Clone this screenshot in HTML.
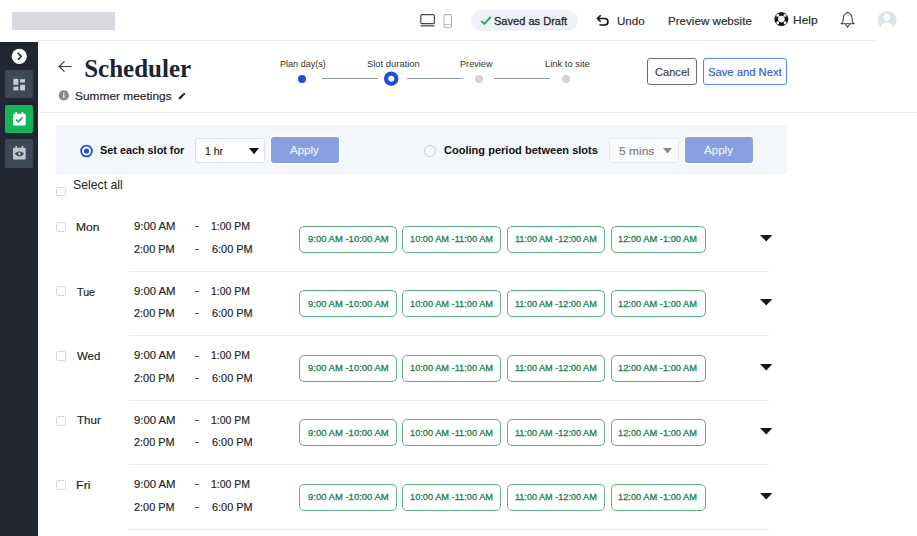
<!DOCTYPE html>
<html><head><meta charset="utf-8"><title>Scheduler</title>
<style>
html,body{margin:0;padding:0;}
body{width:917px;height:536px;position:relative;overflow:hidden;background:#fff;font-family:"Liberation Sans", sans-serif;}
.t{position:absolute;line-height:1;white-space:nowrap;}
.r{position:absolute;display:block;}
.pt{text-align:center;font-size:9.4px;color:#2a8a52;}
</style></head><body>
<div class="r" style="left:12px;top:12px;width:103px;height:18px;background:#d8d8e2;"></div>
<div class="r" style="left:38px;top:40px;width:840px;height:1px;background:#e8ebf1;"></div>
<svg class="r" style="left:419px;top:12px" width="18" height="16" viewBox="0 0 18 16"><rect x="1.8" y="2.7" width="13.6" height="8.9" rx="1.2" fill="none" stroke="#4a4a4a" stroke-width="1.25"/><rect x="1.6" y="13.2" width="14" height="1.25" fill="#4a4a4a"/></svg>
<svg class="r" style="left:442px;top:13px" width="11" height="16" viewBox="0 0 11 16"><rect x="1.9" y="1.6" width="7.6" height="12.8" rx="1.1" fill="none" stroke="#b8b8b8" stroke-width="1.05"/><line x1="2" y1="11.6" x2="9.4" y2="11.6" stroke="#b8b8b8" stroke-width="1"/></svg>
<div class="r" style="left:471px;top:10px;width:107px;height:21px;background:#eff3f7;border-radius:11px;"></div>
<svg class="r" style="left:480px;top:15px" width="12" height="11" viewBox="0 0 12 11"><path d="M1.2 5.8 L4.3 9 L10.8 1.8" fill="none" stroke="#1faa4f" stroke-width="1.8"/></svg>
<div class="t" style="left:494.06px;top:16.00px;font-size:10.59px;color:#2b2b2b;transform:scaleX(1.0449);transform-origin:0 0;-webkit-text-stroke:0.3px #2b2b2b;">Saved as Draft</div>
<svg class="r" style="left:596px;top:14px" width="14" height="13" viewBox="0 0 14 13"><path d="M1.8 4.5 H8.7 A3.25 3.25 0 0 1 8.7 11 H3.4" fill="none" stroke="#111" stroke-width="1.6"/><path d="M4.7 1.2 L1.4 4.5 L4.7 7.8" fill="none" stroke="#111" stroke-width="1.6" stroke-linejoin="round"/></svg>
<div class="t" style="left:616.94px;top:16.00px;font-size:10.89px;color:#2b2b2b;transform:scaleX(1.064);transform-origin:0 0;-webkit-text-stroke:0.15px #2b2b2b;">Undo</div>
<div class="t" style="left:667.79px;top:17.00px;font-size:10.45px;color:#2b2b2b;transform:scaleX(1.1122);transform-origin:0 0;-webkit-text-stroke:0.15px #2b2b2b;">Preview website</div>
<svg class="r" style="left:772px;top:11px" width="18" height="17" viewBox="0 0 18 17"><circle cx="9.4" cy="8.1" r="5.1" fill="none" stroke="#111" stroke-width="3.6"/><g fill="#fff"><circle cx="5.6" cy="4.3" r="1.55"/><circle cx="13.2" cy="4.3" r="1.55"/><circle cx="5.6" cy="11.9" r="1.55"/><circle cx="13.2" cy="11.9" r="1.55"/></g><circle cx="9.4" cy="8.1" r="6.6" fill="none" stroke="#333" stroke-width="0.6"/></svg>
<div class="t" style="left:792.63px;top:16.00px;font-size:10.3px;color:#2b2b2b;transform:scaleX(1.165);transform-origin:0 0;-webkit-text-stroke:0.15px #2b2b2b;">Help</div>
<svg class="r" style="left:840px;top:11px" width="16" height="18" viewBox="0 0 16 18"><path d="M7.6 1.3 C5.6 2.6 3.6 3.4 3.4 6 L3.0 10.2 C2.9 11.4 2 12 1.1 12.7 H14.1 C13.2 12 12.4 11.4 12.3 10.2 L11.9 6 C11.7 3.4 9.6 2.6 7.6 1.3 Z" fill="none" stroke="#3a3a3a" stroke-width="1.05" stroke-linejoin="round"/><path d="M5.5 13.2 L7.6 16.2 L9.7 13.2" fill="none" stroke="#3a3a3a" stroke-width="1.05" stroke-linejoin="round"/></svg>
<svg class="r" style="left:877px;top:10px" width="20" height="21" viewBox="0 0 20 21"><defs><clipPath id="av"><circle cx="10.1" cy="10.25" r="9.4"/></clipPath></defs><circle cx="10.1" cy="10.25" r="9.4" fill="#dce4ec"/><g clip-path="url(#av)" fill="#fff"><circle cx="9.9" cy="7.5" r="3.4"/><ellipse cx="9.9" cy="18.8" rx="6.4" ry="6.4"/></g></svg>
<div class="r" style="left:0px;top:42px;width:38px;height:494px;background:#222733;"></div>
<svg class="r" style="left:11px;top:48px" width="17" height="17" viewBox="0 0 17 17"><circle cx="8.3" cy="8.3" r="7.6" fill="#fff"/><path d="M6.9 4.9 L10.2 8.3 L6.9 11.7" fill="none" stroke="#222733" stroke-width="1.6"/></svg>
<div class="r" style="left:5px;top:70px;width:28px;height:28px;background:#3f4857;border-radius:2px;"></div>
<svg class="r" style="left:13px;top:78px" width="13" height="13" viewBox="0 0 13 13" fill="#c9ccd2"><rect x="0.4" y="0.8" width="4.9" height="6"/><rect x="7.1" y="1.2" width="4.9" height="3.3"/><rect x="0.4" y="8.6" width="4.9" height="3.8"/><rect x="7.1" y="6.8" width="4.9" height="5.6"/></svg>
<div class="r" style="left:5px;top:105px;width:28px;height:28px;background:#16b358;border-radius:2px;"></div>
<svg class="r" style="left:12px;top:111px" width="15" height="16" viewBox="0 0 15 16"><rect x="1" y="2.8" width="12.7" height="11.6" rx="1" fill="#fff"/><rect x="3.4" y="1" width="1.6" height="3" fill="#fff"/><rect x="9.7" y="1" width="1.6" height="3" fill="#fff"/><path d="M4.1 8.6 L6.4 10.8 L10.6 6.4" fill="none" stroke="#16b358" stroke-width="1.6"/></svg>
<div class="r" style="left:5px;top:139px;width:28px;height:29px;background:#3f4857;border-radius:2px;"></div>
<svg class="r" style="left:12px;top:145px" width="15" height="16" viewBox="0 0 15 16"><rect x="1" y="2.8" width="12.7" height="11.6" rx="1" fill="#c3c6cc"/><rect x="3.4" y="1" width="1.6" height="3" fill="#c3c6cc"/><rect x="9.7" y="1" width="1.6" height="3" fill="#c3c6cc"/><path d="M2.6 8.8 Q7.35 3.6 12.1 8.8 Q7.35 14 2.6 8.8Z" fill="#3f4857"/><circle cx="7.35" cy="8.8" r="1.4" fill="#c3c6cc"/></svg>
<svg class="r" style="left:57px;top:60px" width="16" height="13" viewBox="0 0 16 13"><path d="M14.5 6.5 H2.5 M7.5 1.3 L2.2 6.5 L7.5 11.7" fill="none" stroke="#3a3a3a" stroke-width="1.15"/></svg>
<div class="t" style="left:84.20px;top:56.00px;font-size:25px;color:#1b2433;font-weight:bold;font-family:'Liberation Serif',serif;">Scheduler</div>
<svg class="r" style="left:58px;top:90px" width="12" height="12" viewBox="0 0 12 12"><circle cx="5.8" cy="5.4" r="5.1" fill="#8a8a8a"/><rect x="5.15" y="4.6" width="1.3" height="3.3" fill="#fff"/><rect x="5.15" y="2.8" width="1.3" height="1.2" fill="#fff"/></svg>
<div class="t" style="left:74.86px;top:91.00px;font-size:11.48px;color:#222;transform:scaleX(1.038);transform-origin:0 0;-webkit-text-stroke:0.15px #222;">Summer meetings</div>
<svg class="r" style="left:177px;top:91px" width="10" height="10" viewBox="0 0 10 10"><path d="M1.6 8.2 L2 6.6 L7 1.6 L8.4 3 L3.4 8 Z" fill="#111"/><line x1="5.6" y1="2.6" x2="7.2" y2="4.2" stroke="#fff" stroke-width="0.6"/></svg>
<div class="t" style="left:279.89px;top:60.00px;font-size:8.98px;color:#333;transform:scaleX(1.0091);transform-origin:0 0;">Plan day(s)</div>
<div class="t" style="left:367.35px;top:60.00px;font-size:8.98px;color:#333;transform:scaleX(1.049);transform-origin:0 0;">Slot duration</div>
<div class="t" style="left:460.48px;top:60.00px;font-size:8.98px;color:#333;transform:scaleX(1.0194);transform-origin:0 0;">Preview</div>
<div class="t" style="left:545.05px;top:60.00px;font-size:8.98px;color:#333;transform:scaleX(1.0452);transform-origin:0 0;">Link to site</div>
<div class="r" style="left:298px;top:74.5px;width:8px;height:8px;background:#1f4fd6;border-radius:50%;"></div>
<div class="r" style="left:322px;top:77.9px;width:56px;height:1.3px;background:#8d97a8;"></div>
<svg class="r" style="left:382px;top:70px" width="18" height="18" viewBox="0 0 18 18"><circle cx="9.2" cy="8.7" r="5.1" fill="#fff" stroke="#1f4fd6" stroke-width="4.2"/></svg>
<div class="r" style="left:407px;top:77.9px;width:56px;height:1.3px;background:#8d97a8;"></div>
<div class="r" style="left:475px;top:74.5px;width:8px;height:8px;background:#d3d3d3;border-radius:50%;"></div>
<div class="r" style="left:494px;top:77.9px;width:56px;height:1.3px;background:#8d97a8;"></div>
<div class="r" style="left:562px;top:74.5px;width:8px;height:8px;background:#d3d3d3;border-radius:50%;"></div>
<div class="r" style="left:647px;top:58px;width:50px;height:27px;box-sizing:border-box;border:1.3px solid #6a6d72;border-radius:3px;"></div>
<div class="t" style="left:655.30px;top:67.00px;font-size:10.74px;color:#3c4043;transform:scaleX(1.0333);transform-origin:0 0;-webkit-text-stroke:0.15px #3c4043;">Cancel</div>
<div class="r" style="left:702.8px;top:58px;width:84.6px;height:27px;box-sizing:border-box;border:1.2px solid #5b86e6;border-radius:3px;"></div>
<div class="t" style="left:707.75px;top:67.00px;font-size:10.74px;color:#2e5bd6;transform:scaleX(1.0464);transform-origin:0 0;-webkit-text-stroke:0.15px #2e5bd6;">Save and Next</div>
<div class="r" style="left:40px;top:112px;width:877px;height:1px;background:#e9edf2;"></div>
<div class="r" style="left:56px;top:125px;width:731px;height:49px;background:#f3f6fa;"></div>
<svg class="r" style="left:78px;top:142px" width="18" height="18" viewBox="0 0 18 18"><circle cx="8.5" cy="9" r="6.6" fill="#fff"/><circle cx="8.5" cy="9" r="5.4" fill="#fff" stroke="#1d4bd4" stroke-width="1.8"/><circle cx="8.5" cy="9" r="2.6" fill="#1d4bd4"/></svg>
<div class="t" style="left:99.70px;top:146.00px;font-size:10.3px;color:#111;font-weight:bold;transform:scaleX(1.0525);transform-origin:0 0;">Set each slot for</div>
<div class="r" style="left:195px;top:138px;width:70px;height:25px;box-sizing:border-box;background:#fff;border:1px solid #dfe3e8;border-radius:3px;"></div>
<div class="t" style="left:205.14px;top:146.00px;font-size:10.89px;color:#222;transform:scaleX(0.9611);transform-origin:0 0;-webkit-text-stroke:0.15px #222;">1 hr</div>
<svg class="r" style="left:249px;top:147.5px" width="10" height="6.5" viewBox="0 0 10 6.5"><path d="M0 0 H10 L5 6.2Z" fill="#111"/></svg>
<div class="r" style="left:271px;top:137px;width:68px;height:26px;background:#889fe0;border-radius:3px;box-shadow:0 0 0 1.5px #fff;"></div>
<div class="t" style="left:290.30px;top:146.00px;font-size:10.3px;color:#f4f6fd;transform:scaleX(1.1192);transform-origin:0 0;-webkit-text-stroke:0.1px #f4f6fd;">Apply</div>
<div class="r" style="left:424.3px;top:145.2px;width:12px;height:12px;box-sizing:border-box;border:1.2px solid #c7cfd9;border-radius:50%;background:#f7f9fb;"></div>
<div class="t" style="left:443.90px;top:145.00px;font-size:10.74px;color:#111;font-weight:bold;transform:scaleX(1.0282);transform-origin:0 0;">Cooling period between slots</div>
<div class="r" style="left:609px;top:138px;width:70px;height:25px;box-sizing:border-box;background:#fafbfc;border:1px solid #e6e9ed;border-radius:3px;"></div>
<div class="t" style="left:619.45px;top:146.00px;font-size:11.48px;color:#777;transform:scaleX(1.0469);transform-origin:0 0;-webkit-text-stroke:0.1px #777;">5 mins</div>
<svg class="r" style="left:663px;top:147.5px" width="9" height="5.5" viewBox="0 0 9 5.5"><path d="M0 0 H9 L4.5 5.4Z" fill="#888"/></svg>
<div class="r" style="left:685px;top:137px;width:68px;height:26px;background:#889fe0;border-radius:3px;box-shadow:0 0 0 1.5px #fff;"></div>
<div class="t" style="left:704.30px;top:146.00px;font-size:10.3px;color:#f4f6fd;transform:scaleX(1.1231);transform-origin:0 0;-webkit-text-stroke:0.1px #f4f6fd;">Apply</div>
<div class="r" style="left:56.4px;top:186.6px;width:9.8px;height:9.5px;box-sizing:border-box;border:1px solid #d6d6da;border-radius:1.5px;background:#fff;"></div>
<div class="t" style="left:72.81px;top:179.00px;font-size:12.36px;color:#222;transform:scaleX(0.9918);transform-origin:0 0;">Select all</div>
<div class="r" style="left:56.4px;top:222px;width:9.8px;height:9.5px;box-sizing:border-box;border:1px solid #d6d6da;border-radius:1.5px;background:#fff;"></div>
<div class="t" style="left:76.20px;top:223.00px;font-size:10.01px;color:#222;transform:scaleX(1.2);transform-origin:0 0;-webkit-text-stroke:0.15px #222;">Mon</div>
<div class="t" style="left:134.40px;top:222.00px;font-size:10.01px;color:#222;transform:scaleX(1.1306);transform-origin:0 0;-webkit-text-stroke:0.15px #222;">9:00 AM</div>
<div class="t" style="left:210.56px;top:222.00px;font-size:10.01px;color:#222;transform:scaleX(1.0444);transform-origin:0 0;-webkit-text-stroke:0.15px #222;">1:00 PM</div>
<div class="t" style="left:134.40px;top:245.00px;font-size:10.01px;color:#222;transform:scaleX(1.0919);transform-origin:0 0;-webkit-text-stroke:0.15px #222;">2:00 PM</div>
<div class="t" style="left:211.60px;top:245.00px;font-size:10.01px;color:#222;transform:scaleX(1.0892);transform-origin:0 0;-webkit-text-stroke:0.15px #222;">6:00 PM</div>
<div class="r" style="left:194.8px;top:226px;width:3.8px;height:1.2px;background:#555;"></div>
<div class="r" style="left:194.8px;top:249px;width:3.8px;height:1.2px;background:#555;"></div>
<div class="r" style="left:299px;top:226px;width:98px;height:27px;box-sizing:border-box;border:1.3px solid #5cb282;border-radius:5px;"></div>
<div class="t" style="left:307.70px;top:235.00px;font-size:9.12px;color:#248049;transform:scaleX(1.0416);transform-origin:0 0;-webkit-text-stroke:0.28px #248049;">9:00 AM -10:00 AM</div>
<div class="r" style="left:402px;top:226px;width:99px;height:27px;box-sizing:border-box;border:1.3px solid #5cb282;border-radius:5px;"></div>
<div class="t" style="left:410.19px;top:235.00px;font-size:9.12px;color:#248049;transform:scaleX(1.0138);transform-origin:0 0;-webkit-text-stroke:0.28px #248049;">10:00 AM -11:00 AM</div>
<div class="r" style="left:507px;top:226px;width:98px;height:27px;box-sizing:border-box;border:1.3px solid #5cb282;border-radius:5px;"></div>
<div class="t" style="left:514.90px;top:235.00px;font-size:9.12px;color:#248049;-webkit-text-stroke:0.28px #248049;">11:00 AM -12:00 AM</div>
<div class="r" style="left:611px;top:226px;width:95px;height:27px;box-sizing:border-box;border:1.3px solid #5cb282;border-radius:5px;"></div>
<div class="t" style="left:618.48px;top:235.00px;font-size:9.12px;color:#248049;transform:scaleX(1.0197);transform-origin:0 0;-webkit-text-stroke:0.28px #248049;">12:00 AM -1:00 AM</div>
<svg class="r" style="left:760px;top:234.80px" width="13" height="7" viewBox="0 0 13 7"><path d="M0 0 H12.4 L6.2 6.4Z" fill="#15151f"/></svg>
<div class="r" style="left:129px;top:271px;width:640px;height:1px;background:#e9edf2;"></div>
<div class="r" style="left:56.4px;top:286px;width:9.8px;height:9.5px;box-sizing:border-box;border:1px solid #d6d6da;border-radius:1.5px;background:#fff;"></div>
<div class="t" style="left:77.00px;top:288.00px;font-size:10.01px;color:#222;transform:scaleX(1.0706);transform-origin:0 0;-webkit-text-stroke:0.15px #222;">Tue</div>
<div class="t" style="left:134.40px;top:287.00px;font-size:10.01px;color:#222;transform:scaleX(1.1306);transform-origin:0 0;-webkit-text-stroke:0.15px #222;">9:00 AM</div>
<div class="t" style="left:210.56px;top:287.00px;font-size:10.01px;color:#222;transform:scaleX(1.0444);transform-origin:0 0;-webkit-text-stroke:0.15px #222;">1:00 PM</div>
<div class="t" style="left:134.40px;top:309.00px;font-size:10.01px;color:#222;transform:scaleX(1.0919);transform-origin:0 0;-webkit-text-stroke:0.15px #222;">2:00 PM</div>
<div class="t" style="left:211.60px;top:309.00px;font-size:10.01px;color:#222;transform:scaleX(1.0892);transform-origin:0 0;-webkit-text-stroke:0.15px #222;">6:00 PM</div>
<div class="r" style="left:194.8px;top:291px;width:3.8px;height:1.2px;background:#555;"></div>
<div class="r" style="left:194.8px;top:313px;width:3.8px;height:1.2px;background:#555;"></div>
<div class="r" style="left:299px;top:290px;width:98px;height:27px;box-sizing:border-box;border:1.3px solid #5cb282;border-radius:5px;"></div>
<div class="t" style="left:307.70px;top:300.00px;font-size:9.12px;color:#248049;transform:scaleX(1.0416);transform-origin:0 0;-webkit-text-stroke:0.28px #248049;">9:00 AM -10:00 AM</div>
<div class="r" style="left:402px;top:290px;width:99px;height:27px;box-sizing:border-box;border:1.3px solid #5cb282;border-radius:5px;"></div>
<div class="t" style="left:410.19px;top:300.00px;font-size:9.12px;color:#248049;transform:scaleX(1.0138);transform-origin:0 0;-webkit-text-stroke:0.28px #248049;">10:00 AM -11:00 AM</div>
<div class="r" style="left:507px;top:290px;width:98px;height:27px;box-sizing:border-box;border:1.3px solid #5cb282;border-radius:5px;"></div>
<div class="t" style="left:514.90px;top:300.00px;font-size:9.12px;color:#248049;-webkit-text-stroke:0.28px #248049;">11:00 AM -12:00 AM</div>
<div class="r" style="left:611px;top:290px;width:95px;height:27px;box-sizing:border-box;border:1.3px solid #5cb282;border-radius:5px;"></div>
<div class="t" style="left:618.48px;top:300.00px;font-size:9.12px;color:#248049;transform:scaleX(1.0197);transform-origin:0 0;-webkit-text-stroke:0.28px #248049;">12:00 AM -1:00 AM</div>
<svg class="r" style="left:760px;top:299.30px" width="13" height="7" viewBox="0 0 13 7"><path d="M0 0 H12.4 L6.2 6.4Z" fill="#15151f"/></svg>
<div class="r" style="left:129px;top:335px;width:640px;height:1px;background:#e9edf2;"></div>
<div class="r" style="left:56.4px;top:351px;width:9.8px;height:9.5px;box-sizing:border-box;border:1px solid #d6d6da;border-radius:1.5px;background:#fff;"></div>
<div class="t" style="left:77.20px;top:352.00px;font-size:10.01px;color:#222;transform:scaleX(1.145);transform-origin:0 0;-webkit-text-stroke:0.15px #222;">Wed</div>
<div class="t" style="left:134.40px;top:351.00px;font-size:10.01px;color:#222;transform:scaleX(1.1306);transform-origin:0 0;-webkit-text-stroke:0.15px #222;">9:00 AM</div>
<div class="t" style="left:210.56px;top:351.00px;font-size:10.01px;color:#222;transform:scaleX(1.0444);transform-origin:0 0;-webkit-text-stroke:0.15px #222;">1:00 PM</div>
<div class="t" style="left:134.40px;top:374.00px;font-size:10.01px;color:#222;transform:scaleX(1.0919);transform-origin:0 0;-webkit-text-stroke:0.15px #222;">2:00 PM</div>
<div class="t" style="left:211.60px;top:374.00px;font-size:10.01px;color:#222;transform:scaleX(1.0892);transform-origin:0 0;-webkit-text-stroke:0.15px #222;">6:00 PM</div>
<div class="r" style="left:194.8px;top:356px;width:3.8px;height:1.2px;background:#555;"></div>
<div class="r" style="left:194.8px;top:378px;width:3.8px;height:1.2px;background:#555;"></div>
<div class="r" style="left:299px;top:355px;width:98px;height:27px;box-sizing:border-box;border:1.3px solid #5cb282;border-radius:5px;"></div>
<div class="t" style="left:307.70px;top:364.00px;font-size:9.12px;color:#248049;transform:scaleX(1.0416);transform-origin:0 0;-webkit-text-stroke:0.28px #248049;">9:00 AM -10:00 AM</div>
<div class="r" style="left:402px;top:355px;width:99px;height:27px;box-sizing:border-box;border:1.3px solid #5cb282;border-radius:5px;"></div>
<div class="t" style="left:410.19px;top:364.00px;font-size:9.12px;color:#248049;transform:scaleX(1.0138);transform-origin:0 0;-webkit-text-stroke:0.28px #248049;">10:00 AM -11:00 AM</div>
<div class="r" style="left:507px;top:355px;width:98px;height:27px;box-sizing:border-box;border:1.3px solid #5cb282;border-radius:5px;"></div>
<div class="t" style="left:514.90px;top:364.00px;font-size:9.12px;color:#248049;-webkit-text-stroke:0.28px #248049;">11:00 AM -12:00 AM</div>
<div class="r" style="left:611px;top:355px;width:95px;height:27px;box-sizing:border-box;border:1.3px solid #5cb282;border-radius:5px;"></div>
<div class="t" style="left:618.48px;top:364.00px;font-size:9.12px;color:#248049;transform:scaleX(1.0197);transform-origin:0 0;-webkit-text-stroke:0.28px #248049;">12:00 AM -1:00 AM</div>
<svg class="r" style="left:760px;top:363.80px" width="13" height="7" viewBox="0 0 13 7"><path d="M0 0 H12.4 L6.2 6.4Z" fill="#15151f"/></svg>
<div class="r" style="left:129px;top:400px;width:640px;height:1px;background:#e9edf2;"></div>
<div class="r" style="left:56.4px;top:416px;width:9.8px;height:9.5px;box-sizing:border-box;border:1px solid #d6d6da;border-radius:1.5px;background:#fff;"></div>
<div class="t" style="left:77.00px;top:416.00px;font-size:10.01px;color:#222;transform:scaleX(1.155);transform-origin:0 0;-webkit-text-stroke:0.15px #222;">Thur</div>
<div class="t" style="left:134.40px;top:416.00px;font-size:10.01px;color:#222;transform:scaleX(1.1306);transform-origin:0 0;-webkit-text-stroke:0.15px #222;">9:00 AM</div>
<div class="t" style="left:210.56px;top:416.00px;font-size:10.01px;color:#222;transform:scaleX(1.0444);transform-origin:0 0;-webkit-text-stroke:0.15px #222;">1:00 PM</div>
<div class="t" style="left:134.40px;top:438.00px;font-size:10.01px;color:#222;transform:scaleX(1.0919);transform-origin:0 0;-webkit-text-stroke:0.15px #222;">2:00 PM</div>
<div class="t" style="left:211.60px;top:438.00px;font-size:10.01px;color:#222;transform:scaleX(1.0892);transform-origin:0 0;-webkit-text-stroke:0.15px #222;">6:00 PM</div>
<div class="r" style="left:194.8px;top:420px;width:3.8px;height:1.2px;background:#555;"></div>
<div class="r" style="left:194.8px;top:442px;width:3.8px;height:1.2px;background:#555;"></div>
<div class="r" style="left:299px;top:419px;width:98px;height:27px;box-sizing:border-box;border:1.3px solid #5cb282;border-radius:5px;"></div>
<div class="t" style="left:307.70px;top:429.00px;font-size:9.12px;color:#248049;transform:scaleX(1.0416);transform-origin:0 0;-webkit-text-stroke:0.28px #248049;">9:00 AM -10:00 AM</div>
<div class="r" style="left:402px;top:419px;width:99px;height:27px;box-sizing:border-box;border:1.3px solid #5cb282;border-radius:5px;"></div>
<div class="t" style="left:410.19px;top:429.00px;font-size:9.12px;color:#248049;transform:scaleX(1.0138);transform-origin:0 0;-webkit-text-stroke:0.28px #248049;">10:00 AM -11:00 AM</div>
<div class="r" style="left:507px;top:419px;width:98px;height:27px;box-sizing:border-box;border:1.3px solid #5cb282;border-radius:5px;"></div>
<div class="t" style="left:514.90px;top:429.00px;font-size:9.12px;color:#248049;-webkit-text-stroke:0.28px #248049;">11:00 AM -12:00 AM</div>
<div class="r" style="left:611px;top:419px;width:95px;height:27px;box-sizing:border-box;border:1.3px solid #5cb282;border-radius:5px;"></div>
<div class="t" style="left:618.48px;top:429.00px;font-size:9.12px;color:#248049;transform:scaleX(1.0197);transform-origin:0 0;-webkit-text-stroke:0.28px #248049;">12:00 AM -1:00 AM</div>
<svg class="r" style="left:760px;top:428.30px" width="13" height="7" viewBox="0 0 13 7"><path d="M0 0 H12.4 L6.2 6.4Z" fill="#15151f"/></svg>
<div class="r" style="left:129px;top:464px;width:640px;height:1px;background:#e9edf2;"></div>
<div class="r" style="left:56.4px;top:480px;width:9.8px;height:9.5px;box-sizing:border-box;border:1px solid #d6d6da;border-radius:1.5px;background:#fff;"></div>
<div class="t" style="left:76.35px;top:481.00px;font-size:10.01px;color:#222;transform:scaleX(1.25);transform-origin:0 0;-webkit-text-stroke:0.15px #222;">Fri</div>
<div class="t" style="left:134.40px;top:480.00px;font-size:10.01px;color:#222;transform:scaleX(1.1306);transform-origin:0 0;-webkit-text-stroke:0.15px #222;">9:00 AM</div>
<div class="t" style="left:210.56px;top:480.00px;font-size:10.01px;color:#222;transform:scaleX(1.0444);transform-origin:0 0;-webkit-text-stroke:0.15px #222;">1:00 PM</div>
<div class="t" style="left:134.40px;top:503.00px;font-size:10.01px;color:#222;transform:scaleX(1.0919);transform-origin:0 0;-webkit-text-stroke:0.15px #222;">2:00 PM</div>
<div class="t" style="left:211.60px;top:503.00px;font-size:10.01px;color:#222;transform:scaleX(1.0892);transform-origin:0 0;-webkit-text-stroke:0.15px #222;">6:00 PM</div>
<div class="r" style="left:194.8px;top:484px;width:3.8px;height:1.2px;background:#555;"></div>
<div class="r" style="left:194.8px;top:507px;width:3.8px;height:1.2px;background:#555;"></div>
<div class="r" style="left:299px;top:484px;width:98px;height:27px;box-sizing:border-box;border:1.3px solid #5cb282;border-radius:5px;"></div>
<div class="t" style="left:307.70px;top:493.00px;font-size:9.12px;color:#248049;transform:scaleX(1.0416);transform-origin:0 0;-webkit-text-stroke:0.28px #248049;">9:00 AM -10:00 AM</div>
<div class="r" style="left:402px;top:484px;width:99px;height:27px;box-sizing:border-box;border:1.3px solid #5cb282;border-radius:5px;"></div>
<div class="t" style="left:410.19px;top:493.00px;font-size:9.12px;color:#248049;transform:scaleX(1.0138);transform-origin:0 0;-webkit-text-stroke:0.28px #248049;">10:00 AM -11:00 AM</div>
<div class="r" style="left:507px;top:484px;width:98px;height:27px;box-sizing:border-box;border:1.3px solid #5cb282;border-radius:5px;"></div>
<div class="t" style="left:514.90px;top:493.00px;font-size:9.12px;color:#248049;-webkit-text-stroke:0.28px #248049;">11:00 AM -12:00 AM</div>
<div class="r" style="left:611px;top:484px;width:95px;height:27px;box-sizing:border-box;border:1.3px solid #5cb282;border-radius:5px;"></div>
<div class="t" style="left:618.48px;top:493.00px;font-size:9.12px;color:#248049;transform:scaleX(1.0197);transform-origin:0 0;-webkit-text-stroke:0.28px #248049;">12:00 AM -1:00 AM</div>
<svg class="r" style="left:760px;top:492.80px" width="13" height="7" viewBox="0 0 13 7"><path d="M0 0 H12.4 L6.2 6.4Z" fill="#15151f"/></svg>
<div class="r" style="left:129px;top:529px;width:640px;height:1px;background:#e9edf2;"></div>
</body></html>
